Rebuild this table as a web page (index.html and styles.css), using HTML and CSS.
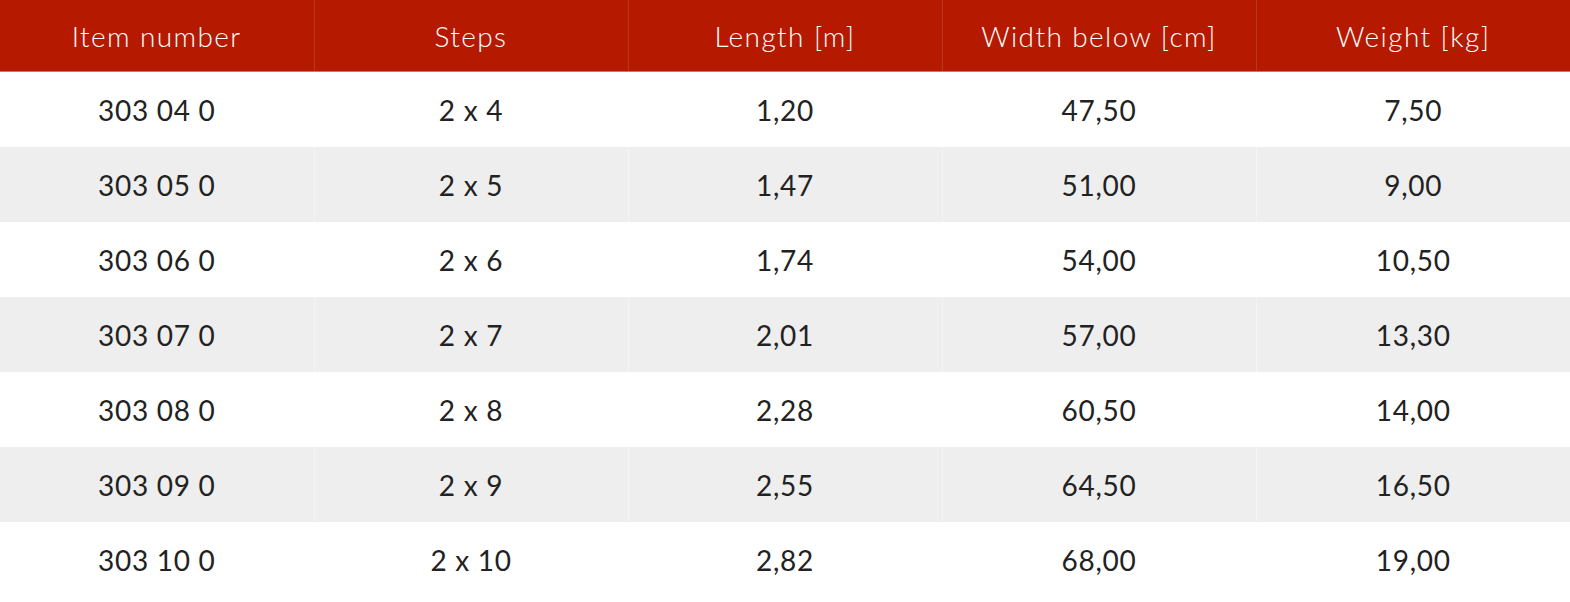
FILE: index.html
```html
<!DOCTYPE html>
<html>
<head>
<meta charset="utf-8">
<link rel="stylesheet" href="styles.css">
</head>
<body>
<table class="spec">
  <thead>
    <tr><th>Item number</th><th>Steps</th><th>Length [m]</th><th>Width below [cm]</th><th>Weight [kg]</th></tr>
  </thead>
  <tbody>
    <tr><td>303 04 0</td><td>2 x 4</td><td>1,20</td><td>47,50</td><td>7,50</td></tr>
    <tr><td>303 05 0</td><td>2 x 5</td><td>1,47</td><td>51,00</td><td>9,00</td></tr>
    <tr><td>303 06 0</td><td>2 x 6</td><td>1,74</td><td>54,00</td><td>10,50</td></tr>
    <tr><td>303 07 0</td><td>2 x 7</td><td>2,01</td><td>57,00</td><td>13,30</td></tr>
    <tr><td>303 08 0</td><td>2 x 8</td><td>2,28</td><td>60,50</td><td>14,00</td></tr>
    <tr><td>303 09 0</td><td>2 x 9</td><td>2,55</td><td>64,50</td><td>16,50</td></tr>
    <tr><td>303 10 0</td><td>2 x 10</td><td>2,82</td><td>68,00</td><td>19,00</td></tr>
  </tbody>
</table>
</body>
</html>
```
FILE: styles.css
```css
html, body {
  margin: 0;
  padding: 0;
  background: #ffffff;
}
.spec {
  width: 1570px;
  border-collapse: collapse;
  table-layout: fixed;
  font-family: Lato, "Noto Sans", sans-serif;
  font-size: 28px;
  font-weight: 400;
  color: #222222;
}
.spec th {
  background: #b51a00;
  color: #ffffff;
  font-weight: 300;
  height: 71px;
  padding: 0;
  text-align: center;
  letter-spacing: 1.4px;
  border-bottom: 1px solid #d9705f;
  border-left: 1px solid rgba(255,255,255,0.12);
}
.spec td {
  height: 75px;
  padding: 0;
  text-align: center;
  letter-spacing: 0.7px;
  border-left: 1px solid rgba(255,255,255,0.35);
}
.spec th:first-child, .spec td:first-child {
  border-left: none;
}
.spec tbody tr:nth-child(even) td {
  background: #eeeeee;
}
```
